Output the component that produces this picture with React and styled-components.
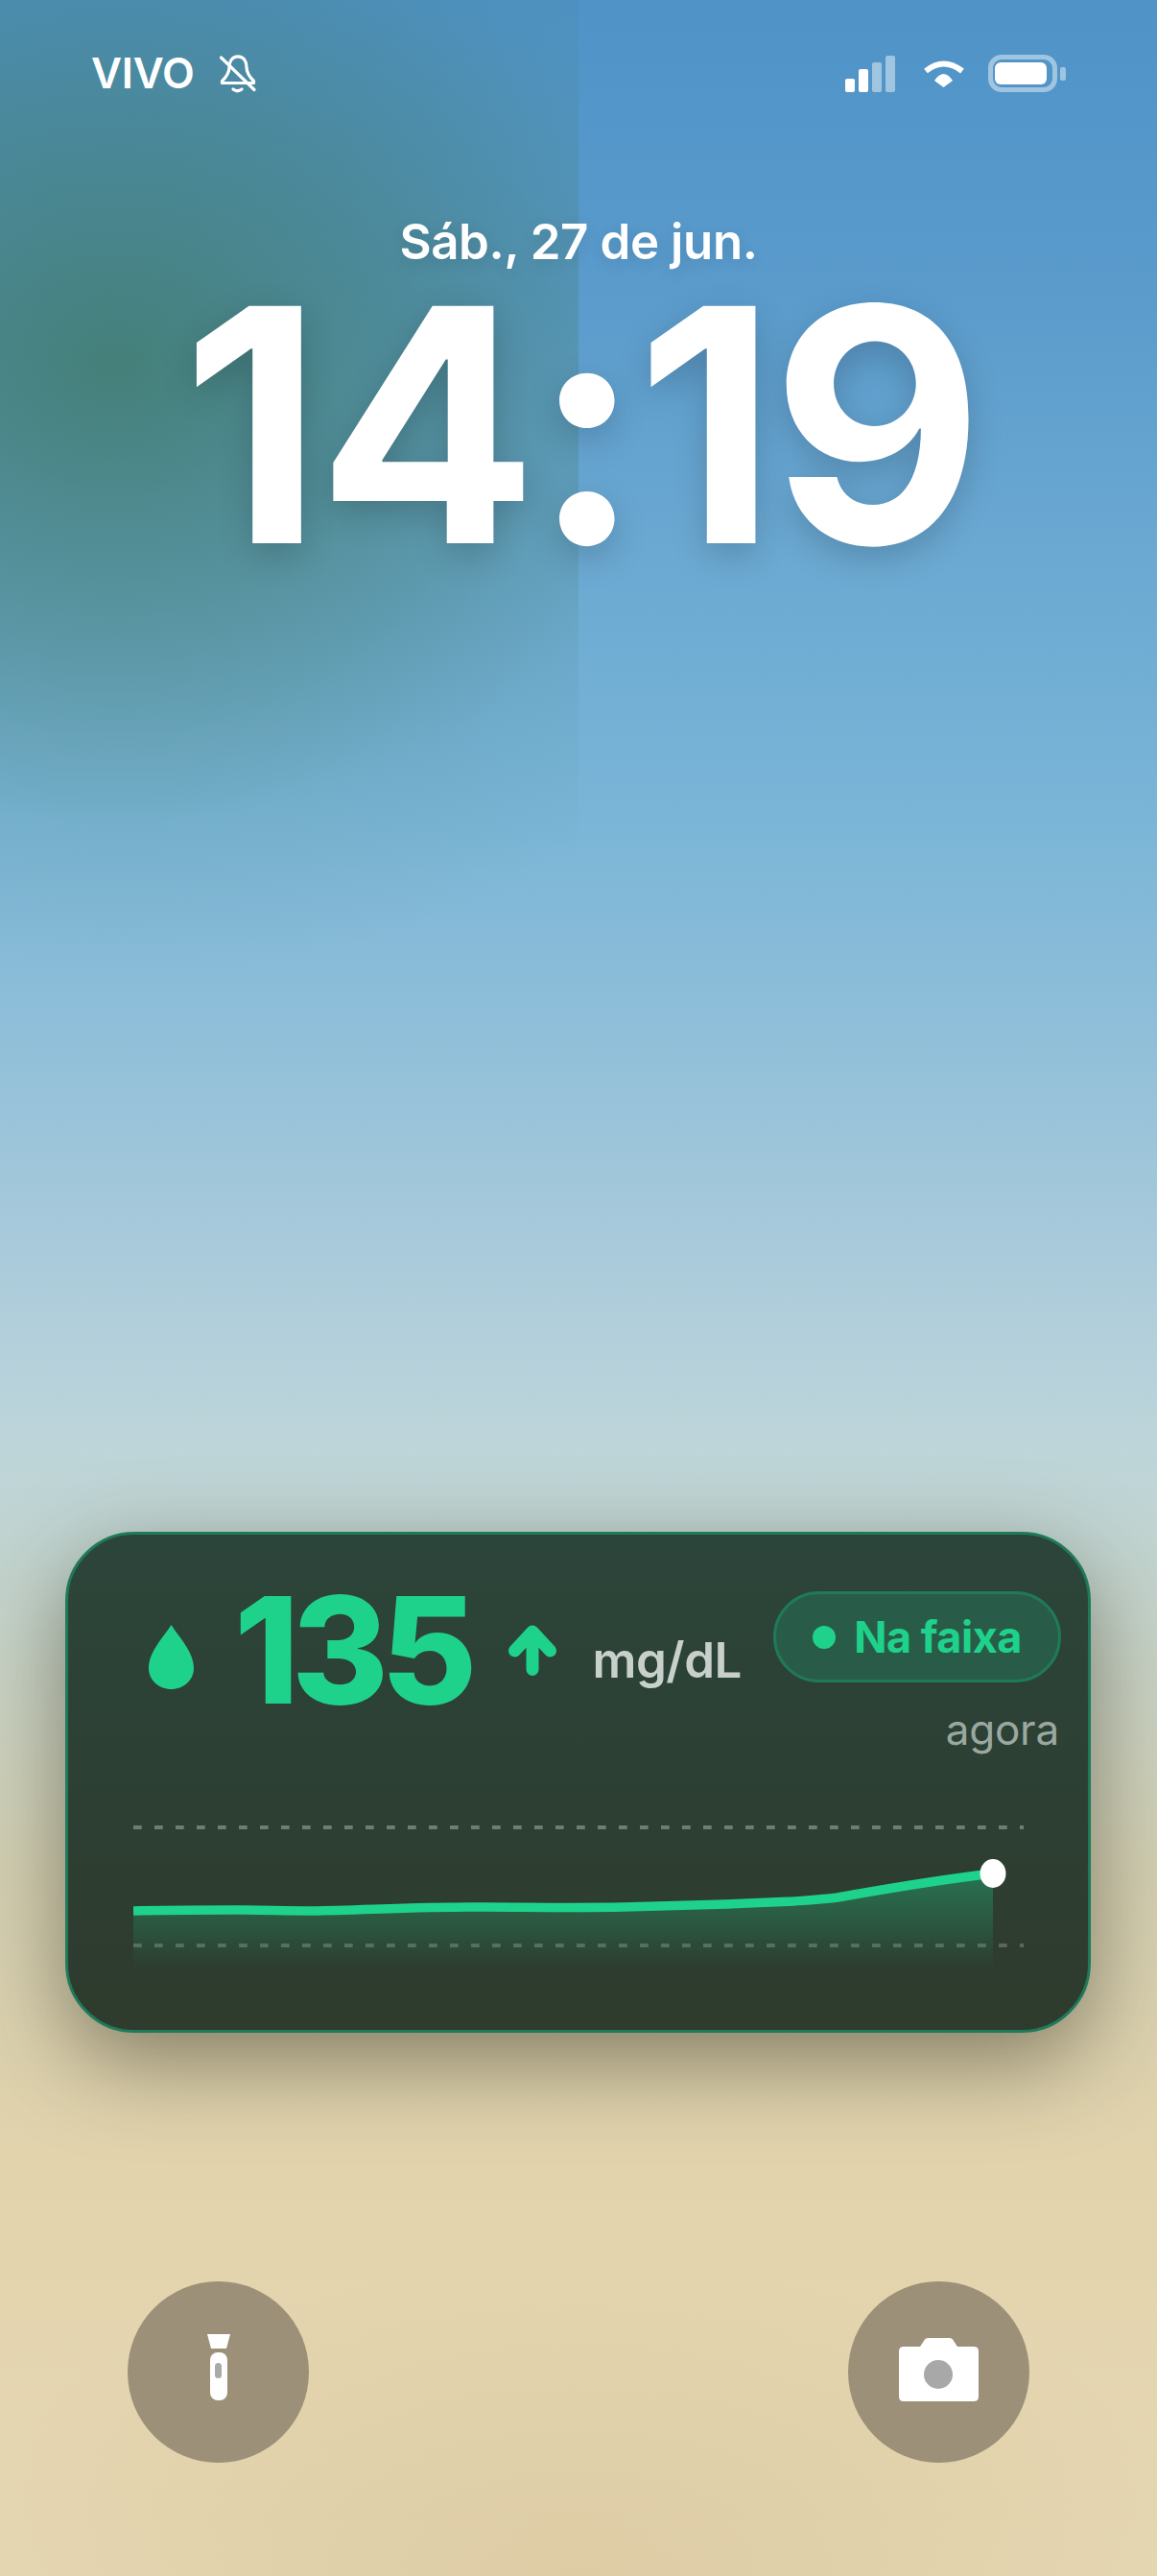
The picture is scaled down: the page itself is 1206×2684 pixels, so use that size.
import styled, { createGlobalStyle } from "styled-components";

const GlobalStyle = createGlobalStyle`
  html, body {
    margin: 0;
    padding: 0;
  }
  body {
    font-family: Inter, "Noto Sans", sans-serif;
  }
`;

const Screen = styled.div`
  position: relative;
  width: 1206px;
  height: 2684px;
  overflow: hidden;
  display: flex;
  flex-direction: column;
  background:
    radial-gradient(ellipse 700px 320px at 50% 100%, rgba(205, 182, 135, 0.35), rgba(205, 182, 135, 0)),
    linear-gradient(
      180deg,
      #4f93c7 0px,
      #5a9bcc 300px,
      #6aa8d2 560px,
      #7ab5d7 850px,
      #90bfd9 1080px,
      #a9cadb 1300px,
      #bdd5da 1500px,
      #c2d4cf 1620px,
      #d3cfb2 1950px,
      #e2d3ac 2250px,
      #e6d8b4 2684px
    );

  /* green tint that only covers the left half of the wallpaper */
  &::before {
    content: "";
    position: absolute;
    left: 0;
    top: 0;
    width: 603px;
    height: 1100px;
    background: radial-gradient(
      ellipse 800px 640px at 120px 380px,
      rgba(62, 120, 100, 0.8) 0%,
      rgba(62, 120, 100, 0.42) 45%,
      rgba(62, 120, 100, 0.1) 75%,
      rgba(62, 120, 100, 0) 100%
    );
  }
`;

const StatusBar = styled.div`
  position: relative;
  flex: none;
  height: 39px;
  margin-top: 57px;
  padding: 0 95px;
  display: flex;
  align-items: center;
  justify-content: space-between;
`;

const Carrier = styled.div`
  display: flex;
  align-items: center;
  gap: 26px;
  color: #ffffff;
  font-size: 44px;
  font-weight: 600;
  letter-spacing: -0.2px;
  line-height: 39px;
`;

const StatusIcons = styled.div`
  display: flex;
  align-items: center;
  gap: 24px;
`;

const SignalBars = styled.div`
  display: flex;
  align-items: flex-end;
  gap: 4px;
  height: 38px;
  margin-right: 5px;
`;

const SignalBar = styled.span`
  width: 10px;
  height: ${(props) => props.$h}px;
  border-radius: 2px;
  background: ${(props) => (props.$on ? "#ffffff" : "rgba(255, 255, 255, 0.45)")};
`;

const Battery = styled.div`
  display: flex;
  align-items: center;
  gap: 3px;
`;

const BatteryBody = styled.div`
  box-sizing: border-box;
  width: 72px;
  height: 39px;
  padding: 3px 2px;
  border: 5px solid rgba(255, 255, 255, 0.45);
  border-radius: 14px;
`;

const BatteryFill = styled.div`
  width: 54px;
  height: 100%;
  border-radius: 6px;
  background: #ffffff;
`;

const BatteryNub = styled.div`
  width: 6px;
  height: 14px;
  border-radius: 2px;
  background: rgba(255, 255, 255, 0.45);
`;

const DateLabel = styled.div`
  position: relative;
  flex: none;
  margin-top: 125px;
  text-align: center;
  color: #ffffff;
  font-size: 51px;
  font-weight: 600;
  letter-spacing: -0.4px;
  line-height: 62px;
  text-shadow: 0 4px 16px rgba(0, 0, 0, 0.12);
`;

const Clock = styled.div`
  position: relative;
  flex: none;
  margin-top: 30px;
  padding-left: 3px;
  text-align: center;
  color: #ffffff;
  font-size: 340px;
  font-weight: 700;
  letter-spacing: -5.5px;
  line-height: 260px;
  text-shadow: 0 12px 36px rgba(0, 0, 0, 0.18);
`;

const Widget = styled.section`
  position: relative;
  flex: none;
  box-sizing: border-box;
  width: 1069px;
  height: 522px;
  margin: 1023px 0 0 68px;
  padding: 0 28px 0 68px;
  border: 3px solid #1f7a5a;
  border-radius: 72px;
  background: linear-gradient(180deg, #2c453a 0%, #2d3f33 55%, #2e3b2d 100%);
  box-shadow: 0 30px 90px rgba(50, 45, 30, 0.5);
`;

const ReadingRow = styled.div`
  display: flex;
  align-items: flex-start;
  justify-content: space-between;
  padding: 59px 0 0 16px;
`;

const Reading = styled.div`
  display: flex;
  align-items: center;
`;

const DropIcon = styled.svg`
  display: block;
  margin-top: 14px;
`;

const Glucose = styled.span`
  margin-left: 42px;
  color: #1ed28c;
  font-size: 154px;
  font-weight: 800;
  letter-spacing: -8px;
  line-height: 123px;
`;

const ArrowIcon = styled.svg`
  display: block;
  margin-left: 40px;
`;

const Unit = styled.span`
  margin: 21px 0 0 38px;
  color: #c8d0cc;
  font-size: 51px;
  font-weight: 600;
  letter-spacing: -0.5px;
  line-height: 60px;
`;

const StatusColumn = styled.div`
  display: flex;
  flex-direction: column;
  align-items: flex-end;
`;

const StatusPill = styled.div`
  box-sizing: border-box;
  width: 300px;
  height: 95px;
  display: flex;
  align-items: center;
  justify-content: center;
  gap: 19px;
  border: 3px solid #1f7a5a;
  border-radius: 48px;
  background: #295c48;
  color: #1ed28c;
  font-size: 45px;
  font-weight: 700;
  letter-spacing: -0.5px;
`;

const StatusDot = styled.span`
  width: 24px;
  height: 24px;
  border-radius: 50%;
  background: #1ed28c;
`;

const UpdatedAt = styled.div`
  margin: 22px 2px 0 0;
  color: #9aa8a2;
  font-size: 44px;
  font-weight: 400;
  letter-spacing: -0.2px;
  line-height: 54px;
`;

const Chart = styled.svg`
  display: block;
  margin-top: 61px;
`;

const QuickActions = styled.div`
  position: relative;
  flex: none;
  display: flex;
  justify-content: space-between;
  margin-top: 259px;
  padding: 0 133px;
`;

const RoundButton = styled.button`
  width: 189px;
  height: 189px;
  padding: 0;
  display: flex;
  align-items: center;
  justify-content: center;
  border: none;
  border-radius: 50%;
  background: #9c9178;
`;

const ButtonIcon = styled.svg`
  display: block;
  margin-bottom: ${(props) => props.$lift}px;
`;

const sugarLine =
  "M0 101 C35 100 70 100 102 100 C130 100 160 101 186 101 C240 100 295 97 351 97 C405 97 460 98 511 97 C550 96 585 95 618 94 C645 93 668 92 688 91 C702 90 718 89 734 87 C790 77 845 68 896 62";

const App = () => {
  return (
    <Screen>
      <GlobalStyle />
      <StatusBar>
        <Carrier>
          VIVO
          <svg width="38" height="40" viewBox="0 0 38 40" fill="none" stroke="#ffffff" strokeWidth="3.2" strokeLinecap="round" strokeLinejoin="round">
            <path d="M19 1.8 C13 1.8 10 7 10 13 C10 19 7 23 2.5 27.5 V29.5 H35.5 V27.5 C31 23 28 19 28 13 C28 7 25 1.8 19 1.8 Z" />
            <path d="M1.5 3 L36 36.5" />
            <path d="M14 36 Q18.5 39.5 23 36" />
          </svg>
        </Carrier>
        <StatusIcons>
          <SignalBars>
            <SignalBar $on $h={14} />
            <SignalBar $on $h={24} />
            <SignalBar $h={31} />
            <SignalBar $h={38} />
          </SignalBars>
          <svg width="44" height="28" viewBox="0 0 44 28">
            <path d="M3 11 Q21.5 -4 41 11" fill="none" stroke="#ffffff" strokeWidth="6" />
            <path d="M12 21 Q21.5 7 31 21 L21.5 28 Z" fill="#ffffff" />
          </svg>
          <Battery>
            <BatteryBody>
              <BatteryFill />
            </BatteryBody>
            <BatteryNub />
          </Battery>
        </StatusIcons>
      </StatusBar>

      <DateLabel>Sáb., 27 de jun.</DateLabel>
      <Clock>14:19</Clock>

      <Widget>
        <ReadingRow>
          <Reading>
            <DropIcon width="47" height="67" viewBox="0 0 47 67">
              <path d="M23.5 0 C31 12 47 28 47 45 C47 58 36 67 23.5 67 C11 67 0 58 0 45 C0 28 16 12 23.5 0 Z" fill="#1ed28c" />
            </DropIcon>
            <Glucose>135</Glucose>
            <ArrowIcon width="50" height="53" viewBox="0 0 50 53">
              <path d="M25 46.5 V7 M6.5 27 L25 7 L43.5 27" fill="none" stroke="#1ed28c" strokeWidth="13" strokeLinecap="round" strokeLinejoin="round" />
            </ArrowIcon>
            <Unit>mg/dL</Unit>
          </Reading>
          <StatusColumn>
            <StatusPill>
              <StatusDot />
              Na faixa
            </StatusPill>
            <UpdatedAt>agora</UpdatedAt>
          </StatusColumn>
        </ReadingRow>

        <Chart width="934" height="180" viewBox="0 0 934 180">
          <defs>
            <linearGradient id="sugarFill" x1="0" y1="0" x2="0" y2="1">
              <stop offset="0%" stopColor="#1ed28c" stopOpacity="0.36" />
              <stop offset="100%" stopColor="#1ed28c" stopOpacity="0" />
            </linearGradient>
          </defs>
          <line x1="0" y1="14" x2="928" y2="14" stroke="#ffffff" strokeOpacity="0.32" strokeWidth="4" strokeDasharray="8.7 13.3" />
          <line x1="0" y1="137" x2="928" y2="137" stroke="#ffffff" strokeOpacity="0.22" strokeWidth="4" strokeDasharray="8.7 13.3" />
          <path d={`${sugarLine} L896 162 L0 162 Z`} fill="url(#sugarFill)" />
          <path d={sugarLine} fill="none" stroke="#1ed28c" strokeWidth="9.5" />
          <ellipse cx="896" cy="62" rx="13.5" ry="15" fill="#ffffff" />
        </Chart>
      </Widget>

      <QuickActions>
        <RoundButton aria-label="Lanterna">
          <ButtonIcon $lift={10} width="24" height="69" viewBox="0 0 24 69">
            <path d="M0 0 H24 L20 15 H4 Z" fill="#ffffff" />
            <rect x="3" y="19" width="18" height="50" rx="8" fill="#ffffff" />
            <rect x="8" y="30" width="7" height="16" rx="3.5" fill="#aaaaaa" />
          </ButtonIcon>
        </RoundButton>
        <RoundButton aria-label="Câmera">
          <ButtonIcon $lift={5} width="83" height="66" viewBox="0 0 83 66">
            <path d="M5 9 H22 L27 1.5 Q28 0 30 0 H53 Q55 0 56 1.5 L61 9 H78 Q83 9 83 14 V61 Q83 66 78 66 H5 Q0 66 0 61 V14 Q0 9 5 9 Z" fill="#ffffff" />
            <circle cx="41" cy="38" r="15" fill="#a8a8a8" />
          </ButtonIcon>
        </RoundButton>
      </QuickActions>
    </Screen>
  );
};

export default App;
